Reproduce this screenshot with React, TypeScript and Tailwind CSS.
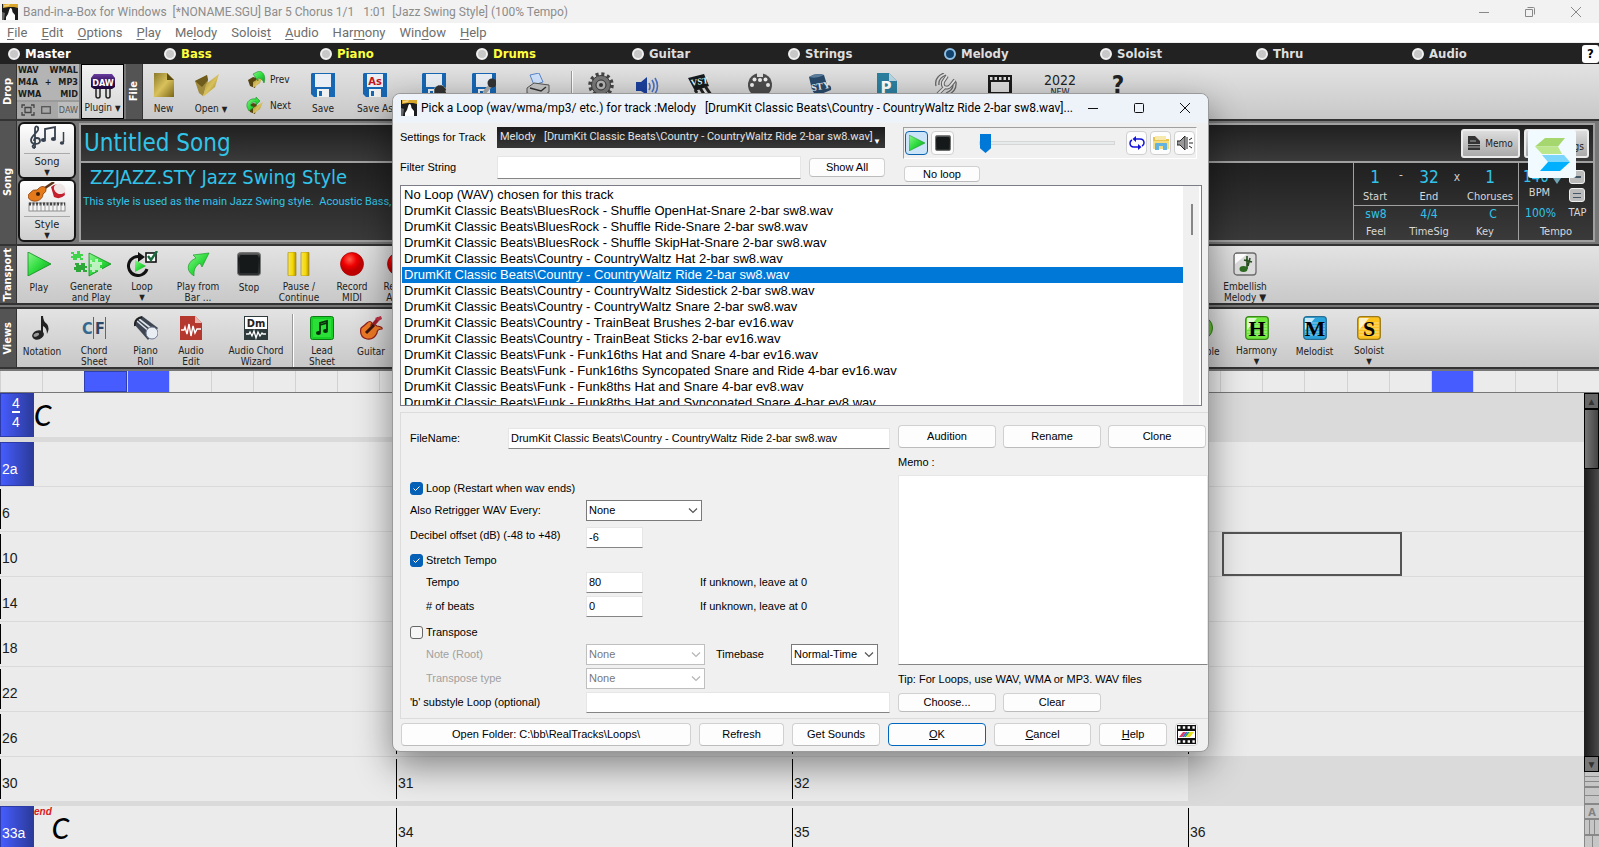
import type { ReactNode } from "react";

const TAHOMA = "font-['DejaVu_Sans_Condensed','DejaVu_Sans',sans-serif]";
const UI = "font-['Roboto','Noto_Sans',sans-serif]";

/* ---------- icons ---------- */

function Defs() {
  return (
    <svg width="0" height="0" className="absolute" aria-hidden="true">
      <defs>
        <linearGradient id="green" x1="0" y1="0" x2="1" y2="1">
          <stop offset="0" stopColor="#8df58d" />
          <stop offset=".5" stopColor="#2fdc3f" />
          <stop offset="1" stopColor="#0f9a20" />
        </linearGradient>
        <linearGradient id="gold" x1="0" y1="0" x2="1" y2="1">
          <stop offset="0" stopColor="#8c7a2c" />
          <stop offset=".5" stopColor="#d9c25c" />
          <stop offset="1" stopColor="#7a6516" />
        </linearGradient>
        <linearGradient id="dark" x1="0" y1="0" x2="0" y2="1">
          <stop offset="0" stopColor="#6b6b6b" />
          <stop offset=".25" stopColor="#161a1a" />
          <stop offset="1" stopColor="#2e3232" />
        </linearGradient>
        <radialGradient id="red" cx=".4" cy=".3">
          <stop offset="0" stopColor="#ff5c4d" />
          <stop offset=".6" stopColor="#f00000" />
          <stop offset="1" stopColor="#c00000" />
        </radialGradient>
        <linearGradient id="yellow" x1="0" y1="0" x2="1" y2="0">
          <stop offset="0" stopColor="#f6e45a" />
          <stop offset=".6" stopColor="#f4d800" />
          <stop offset="1" stopColor="#b08f00" />
        </linearGradient>
        <linearGradient id="purple" x1="0" y1="0" x2="0" y2="1">
          <stop offset="0" stopColor="#6a3fa0" />
          <stop offset=".5" stopColor="#33105c" />
          <stop offset="1" stopColor="#1c0638" />
        </linearGradient>
      </defs>
    </svg>
  );
}

function AppIcon() {
  return (
    <svg viewBox="0 0 16 16" className="size-4 shrink-0">
      <rect width="16" height="16" fill="#1d1d1d" />
      <path d="M1 0H16V4L12 3 7 3 1 4Z" fill="#d9a62c" />
      <path d="M2 1 8 0 7 2 2 3Z" fill="#f3d27a" />
      <path d="M7.500 5Q9 3 10 5.500L10.500 8 13 11V16H4V13L6 10Z" fill="#fff" />
      <path d="M0 8 3 9 2 16H0Z" fill="#666" />
    </svg>
  );
}

function Disk({ children }: { children?: ReactNode }) {
  return (
    <svg viewBox="0 0 24 24" className="size-6">
      <path d="M1 0H24V24H3L0 21V1Z" fill="#1767b3" />
      <rect x="4" y="1" width="16" height="13" fill="#e9eff5" />
      <rect x="6" y="16" width="12" height="8" fill="#f1f1f1" />
      <rect x="8" y="18" width="3" height="5" fill="#1767b3" />
      {children}
    </svg>
  );
}

const NewIcon = () => (
  <svg viewBox="0 0 24 24" className="size-6">
    <path d="M2 0H15L22 7V24H2Z" fill="url(#gold)" />
    <path d="M15 0V7H22Z" fill="#5d4c10" />
  </svg>
);

const FolderIcon = () => (
  <svg viewBox="0 0 26 24" className="h-6 w-[26px]">
    <path d="M1 8 13 2 14 8 9 23 5 20Z" fill="#a08a3c" />
    <path d="M1 8 13 2 14 7 8 14Z" fill="#6d5c1e" />
    <path d="M12 11 25 1 21 14 9 24Z" fill="url(#gold)" />
  </svg>
);

function SmallFolder({ flip }: { flip?: boolean }) {
  return (
    <svg viewBox="0 0 20 18" className="h-[18px] w-5">
      <path d="M2 9 7 6 11 7 9 17 4 15Z" fill="#54440f" />
      <path d="M7 11 17 5 14 12 7 17Z" fill="url(#gold)" />
      {flip ? (
        <path d="M1 10C0 4 5 1 10 2V0L14 4 10 8V5C6 5 4 6 5 9L8 10 3 14Z" fill="url(#green)" stroke="#1c8f2a" strokeWidth=".6" />
      ) : (
        <path d="M7 3 13 0C18 1 20 6 18 12 17 9 15 7 12 7V10Z" fill="url(#green)" stroke="#1c8f2a" strokeWidth=".6" />
      )}
    </svg>
  );
}

const PlugIcon = () => (
  <svg viewBox="0 0 26 26" className="size-[26px]">
    <path d="M6 14h4v9a2 2 0 0 1-4 0ZM16 14h4v9a2 2 0 0 1-4 0Z" fill="#ddd" stroke="#222" strokeWidth="1.5" />
    <path d="M4 1H22L25 5V14L22 16H4L1 14V5Z" fill="url(#purple)" />
    <text x="13" y="13" fontSize="9" fontWeight="700" fill="#fff" textAnchor="middle" fontFamily="DejaVu Sans Condensed, DejaVu Sans">DAW</text>
  </svg>
);

const PrinterIcon = () => (
  <svg viewBox="0 0 24 24" className="size-6">
    <path d="M4 2 13 0 17 9 8 12Z" fill="#cfe2fb" stroke="#5b86c9" />
    <path d="M1 15 8 10 23 12V19L15 24 1 20Z" fill="#c4c4c4" stroke="#555" />
    <path d="M4 15 15 18 20 14" stroke="#333" strokeWidth="1.500" fill="none" />
  </svg>
);

const GearIcon = () => (
  <svg viewBox="0 0 26 26" className="size-[26px]">
    <circle cx="13" cy="13" r="11" fill="none" stroke="#444" strokeWidth="3.5" strokeDasharray="3 2.76" />
    <circle cx="13" cy="13" r="9.5" fill="#777" stroke="#3c3c3c" />
    <circle cx="13" cy="13" r="5" fill="#b5b5b5" stroke="#333" />
    <circle cx="13" cy="13" r="2" fill="#333" />
  </svg>
);

const SpeakerIcon = () => (
  <svg viewBox="0 0 24 24" className="size-6">
    <path d="M1 9H6L12 4V22L6 18H1Z" fill="#1b3f9b" />
    <path d="M14 10q2 4 0 7M17 7q4 6 0 12M20 5q5 8 0 16" fill="none" stroke="#4b70c4" strokeWidth="1.6" />
  </svg>
);

const VstIcon = () => (
  <svg viewBox="0 0 26 24" className="h-6 w-[26px]">
    <path d="M2 5 18 1 23 13 9 18Z" fill="#161a1c" />
    <path d="M9 17 14 24M14 15 20 24M19 13 25 22" stroke="#222" strokeWidth="3" />
    <path d="M12 19 15 24M18 17 21 22" stroke="#eee" strokeWidth="1.200" />
    <text x="5" y="12" fontSize="9" fontWeight="700" fill="#dff" transform="rotate(-8 10 10)" fontFamily="Liberation Sans Narrow">VST</text>
  </svg>
);

const MidiIcon = () => (
  <svg viewBox="0 0 24 24" className="size-6">
    <circle cx="12" cy="12" r="12" fill="#4c4c4c" />
    <rect x="9" y="0" width="6" height="4" fill="#ddd" />
    {[[4, 12], [6.5, 6.5], [12, 7], [17.5, 6.5], [20, 12]].map(([x, y]) => (
      <circle key={x} cx={x} cy={y} r="2" fill="#eee" />
    ))}
  </svg>
);

const StyIcon = () => (
  <svg viewBox="0 0 24 24" className="size-6">
    <path d="M1 4Q8-1 16 2L19 12Q24 12 23 17L8 23 4 17Z" fill="#294a6b" />
    <path d="M1 4Q9 6 16 2Q8-1 1 4" fill="#5c7e9e" />
    <text x="3" y="17" fontSize="10" fontWeight="700" fill="#e4eef5" transform="rotate(-10 10 14)" fontFamily="Liberation Sans Narrow">STY</text>
  </svg>
);

const PIcon = () => (
  <svg viewBox="0 0 24 24" className="size-6">
    <path d="M2 0H14L22 8V24H2Z" fill="#2c7fa0" />
    <path d="M14 0V8H22Z" fill="#b9d6e2" />
    <text x="11" y="20" fontSize="15" fontWeight="700" fill="#fff" textAnchor="middle" fontFamily="DejaVu Sans">P</text>
  </svg>
);

const WrenchIcon = () => (
  <svg viewBox="0 0 24 24" className="size-6">
    <path d="M2 13Q0 4 10 0M5 12Q4 5 12 2M22 9Q23 18 14 22M19 12Q19 17 12 20" fill="none" stroke="#666" strokeWidth="1.3" />
    <path d="M3 22 11 14M13 3 9 9Q8 14 12 14.500 15 15 17 12L21 7" stroke="#666" strokeWidth="3.800" fill="none" />
    <path d="M3 22 11 14M13 3 9 9Q8 14 12 14.500 15 15 17 12L21 7" stroke="#e8e8e8" strokeWidth="1.800" fill="none" />
  </svg>
);

const FilmIcon = () => (
  <svg viewBox="0 0 24 24" className="size-6">
    <rect y="2" width="24" height="22" fill="#1b1b1b" />
    <rect x="3" y="9" width="18" height="10" fill="#dcdcdc" />
    <path d="M2 5.500H22" stroke="#ddd" strokeWidth="3" strokeDasharray="2.5 2" />
  </svg>
);

const SongIcon = () => (
  <svg viewBox="0 0 36 24" className="h-6 w-9">
    <path d="M6 23c-3 0-3-3-1-3M6 23V4c0-4 4-3 3 1-1 3-7 6-7 10 0 5 9 5 9 1 0-4-6-4-6 0" fill="none" stroke="#37414d" strokeWidth="1.8" />
    <path d="M16 14V4L26 2V13" fill="none" stroke="#37414d" strokeWidth="1.8" />
    <ellipse cx="14.5" cy="15" rx="2.6" ry="2" fill="#37414d" />
    <ellipse cx="24.5" cy="14" rx="2.6" ry="2" fill="#37414d" />
    <path d="M34.500 7V17" stroke="#37414d" strokeWidth="1.500" />
    <ellipse cx="33" cy="18" rx="2.200" ry="1.800" fill="#37414d" />
  </svg>
);

const StyleIcon = () => (
  <svg viewBox="0 0 38 30" className="h-[30px] w-[38px]">
    <path d="M14 8 26 0" stroke="#5a3218" strokeWidth="2.5" />
    <path d="M2 11Q5 7 9 8 14 2 18 6 19 10 15 12 15 17 9 19 2 20 0 15Q0 12 2 11" fill="#e57a1a" stroke="#8a3d08" strokeWidth=".8" />
    <circle cx="10" cy="12" r="2" fill="#402008" />
    <path d="M23 5Q28 0 35 4L37 13Q32 18 26 15Z" fill="#c51f2e" />
    <ellipse cx="31.500" cy="6.500" rx="6" ry="5" fill="#efe6e6" transform="rotate(30 31 7)" />
    <rect x="1" y="21" width="36" height="8" fill="#f5f5f5" stroke="#777" strokeWidth=".8" />
    <path d="M1 22H37" stroke="#444" strokeWidth="3" strokeDasharray="2 1.500" />
    <path d="M5 22V29M9 22V29M13 22V29M17 22V29M21 22V29M25 22V29M29 22V29M33 22V29" stroke="#888" strokeWidth=".8" />
  </svg>
);

const PlayIcon = () => (
  <svg viewBox="0 0 24 24" className="size-6">
    <path d="M1 0 24 12 1 24Z" fill="url(#green)" stroke="#138a22" strokeWidth=".8" />
  </svg>
);

const GenerateIcon = () => (
  <svg viewBox="0 0 42 26" className="h-[26px] w-[42px]">
    <path d="M19 2 41 13 19 25Z" fill="url(#green)" stroke="#138a22" strokeWidth=".8" />
    <path d="M20 9h2v2h3v-3h3v3h4v3h-2v3h2v2l-4 2v-2h-3v2h-3v-2h-2v-3h2v-3h-2Z" fill="#d5f5d5" opacity=".85" />
    <path d="M1 1h3v2h3V0h3v3h3v2h-2v2h2v2h-3V7H7v2H3V7H1V5h2V3H1Z" fill="#3fd44a" />
    <path d="M5 12h4v2h2v-2h4v3h2v2h-2v2h2v2h-4v-2h-2v2H6v-2H4v-3h2v-2H5Z" fill="#2fa83a" />
  </svg>
);

const LoopIcon = () => (
  <svg viewBox="0 0 32 26" className="h-[26px] w-8">
    <path d="M15 6A9.500 9.500 0 1 0 21 18" fill="none" stroke="#111" strokeWidth="3" />
    <path d="M12 1 19 6 12 11Z" fill="#111" />
    <path d="M9 9 20 15 9 21Z" fill="url(#green)" />
    <rect x="20" y="2" width="10" height="9" fill="#fff" stroke="#111" strokeWidth="1.600" />
    <path d="M22 5 25 9 31 0" fill="none" stroke="#186b3c" strokeWidth="2.400" />
  </svg>
);

const PlayFromIcon = () => (
  <svg viewBox="0 0 24 24" className="size-6">
    <path d="M7 3 23 1 16 15 14 11Q7 15 8 24 0 19 3 12 5 8 10 6Z" fill="url(#green)" stroke="#1c9c2c" strokeWidth=".7" />
  </svg>
);

function StopIcon({ small }: { small?: boolean }) {
  return (
    <svg viewBox="0 0 24 24" className={small ? "size-4" : "size-6"}>
      <rect x=".5" y=".5" width="23" height="23" rx="3" fill="url(#dark)" stroke="#777" />
      <rect x="3" y="3" width="18" height="18" rx="1" fill="#15191a" />
    </svg>
  );
}

const PauseIcon = () => (
  <svg viewBox="0 0 24 24" className="size-6">
    <rect x="1" width="8" height="24" rx="1" fill="url(#yellow)" stroke="#a58a1d" strokeWidth=".7" />
    <rect x="14" width="8" height="24" rx="1" fill="url(#yellow)" stroke="#a58a1d" strokeWidth=".7" />
  </svg>
);

const RecordIcon = () => (
  <svg viewBox="0 0 24 24" className="size-6">
    <circle cx="12" cy="12" r="11.500" fill="url(#red)" stroke="#a80000" strokeWidth=".7" />
  </svg>
);

const EmbellishIcon = () => (
  <svg viewBox="0 0 24 24" className="size-6">
    <rect x="1" y="1" width="22" height="22" rx="3" fill="#dcdcdc" stroke="#6c6c6c" strokeWidth="1.300" />
    <path d="M2 2H14L2 12Z" fill="#fff" />
    <path d="M14 4V17M11 8 19 10M17 6 15 14" stroke="#234d1c" strokeWidth="1.600" fill="none" />
    <ellipse cx="10.500" cy="17" rx="4" ry="3" fill="#2d6b22" />
  </svg>
);

const NoteIcon = () => (
  <svg viewBox="0 0 24 24" className="size-6">
    <path d="M11 0H13Q13 5 17 8 20 12 17 18 17 12 13 10V18H11Z" fill="#222" />
    <ellipse cx="8" cy="19" rx="6" ry="4.500" fill="#222" transform="rotate(-20 8 19)" />
    <ellipse cx="6.500" cy="18.500" rx="3" ry="1.700" fill="#999" transform="rotate(-25 7 19)" />
  </svg>
);

const ChordIcon = () => (
  <svg viewBox="0 0 26 24" className="h-6 w-[26px]">
    <path d="M12.500 1V23M24.500 1V23" stroke="#666" />
    <text x="1" y="18" fontSize="16" fontWeight="700" fill="#33688f" fontFamily="Liberation Sans Narrow, DejaVu Sans Condensed">C</text>
    <text x="14" y="18" fontSize="16" fontWeight="700" fill="#2b4966" fontFamily="Liberation Sans Narrow, DejaVu Sans Condensed">F</text>
  </svg>
);

const RollIcon = () => (
  <svg viewBox="0 0 24 24" className="size-6">
    <path d="M0 8 8 0 24 12 14 24Z" fill="#3d4553" />
    <path d="M3 5 17 17M5 3 19 14" stroke="#dde3ec" strokeWidth="1.600" />
    <path d="M8 1Q0 3 1 10" fill="none" stroke="#222" strokeWidth="2" />
    <circle cx="18" cy="17" r="6" fill="#e9edf4" stroke="#717d92" />
  </svg>
);

const AudioEditIcon = () => (
  <svg viewBox="0 0 24 24" className="size-6">
    <path d="M1 0H16L23 7V24H1Z" fill="#b5382f" />
    <path d="M16 0V7H23Z" fill="#e9b7b0" />
    <path d="M2 14H5L6 11 8 18 10 8 12 20 14 10 16 17 18 13H22" fill="none" stroke="#fff" strokeWidth="1.400" />
  </svg>
);

const WizardIcon = () => (
  <svg viewBox="0 0 24 24" className="size-6">
    <rect width="24" height="24" fill="#2f3a3d" />
    <rect x="1" y="1" width="22" height="12" fill="#fff" />
    <text x="12" y="11" fontSize="11" fontWeight="700" fill="#222" textAnchor="middle" fontFamily="DejaVu Sans Condensed, DejaVu Sans">Dm</text>
    <path d="M2 18H5L6 16 8 20 10 15 12 22 14 16 16 20 18 17 19 18H22" fill="none" stroke="#fff" strokeWidth="1.300" />
  </svg>
);

const LeadSheetIcon = () => (
  <svg viewBox="0 0 24 24" className="size-6">
    <rect x=".5" y=".5" width="23" height="23" rx="2" fill="#18cf25" stroke="#0b7d14" />
    <rect x="3" y="3" width="18" height="18" fill="#3cf04a" opacity=".5" />
    <path d="M10 16V7L17 5V14M10 9 17 7" fill="none" stroke="#0a2e0c" strokeWidth="1.800" />
    <ellipse cx="8.500" cy="17" rx="2.500" ry="2" fill="#0a2e0c" />
    <ellipse cx="15.500" cy="15" rx="2.500" ry="2" fill="#0a2e0c" />
  </svg>
);

const GuitarIcon = () => (
  <svg viewBox="0 0 24 24" className="size-6">
    <path d="M14 9 20 2" stroke="#a01d2c" strokeWidth="3.500" />
    <path d="M16 2 22 0 23 3 19 5Z" fill="#c23144" />
    <path d="M2 12Q6 9 8 7 11 4 13 7L12 9Q16 8 18 10 24 11 23 13 18 13 18 17 15 24 8 23 0 21 2 12" fill="#ed7a25" stroke="#8e1d1d" strokeWidth="1.200" />
    <path d="M7 17 15 9" stroke="#3b1510" strokeWidth="3" />
  </svg>
);

const GlobeIcon = () => (
  <svg viewBox="0 0 24 24" className="size-6">
    <circle cx="12" cy="12" r="11.500" fill="#63bf33" stroke="#2f7d18" />
  </svg>
);

function LetterIcon({ letter, color, edge }: { letter: string; color: string; edge: string }) {
  return (
    <svg viewBox="0 0 24 24" className="size-6">
      <rect x=".7" y=".7" width="22.600" height="22.600" rx="3" fill={color} stroke={edge} strokeWidth="1.300" />
      <path d="M2 2H12L2 14Z" fill="#fff" opacity=".75" />
      <path d="M2 7H22M2 10H22M2 13H22M2 16H22M2 19H22" stroke="#fff" opacity=".6" strokeWidth=".8" />
      <text x="12" y="19.500" fontSize="22" fontWeight="700" fill="#000" textAnchor="middle" fontFamily="Liberation Serif">{letter}</text>
    </svg>
  );
}

const StockLogo = () => (
  <svg viewBox="0 0 48 48" className="size-12">
    <rect width="48" height="48" rx="3" fill="#f1fbff" />
    <path d="M17 8H37L30 16.500H7Z" fill="#a5d76e" />
    <path d="M7 16.500H30L34 24H14Z" fill="#bce68c" />
    <path d="M14 25H36L42 32H20Z" fill="#7cd6fb" />
    <path d="M20 32H42L32 41H12Z" fill="#00b0ff" />
  </svg>
);

const Chevron = ({ dim }: { dim?: boolean }) => (
  <svg viewBox="0 0 10 6" className="pointer-events-none absolute right-1 top-2 h-1.5 w-2.5">
    <path d="M1 .5 5 4.500 9 .5" fill="none" stroke={dim ? "#b5b5b5" : "#555"} strokeWidth="1.200" />
  </svg>
);

/* ---------- main window ---------- */

function MenuBar() {
  const items: [string, string, string][] = [
    ["", "F", "ile"], ["", "E", "dit"], ["", "O", "ptions"], ["", "P", "lay"], ["Me", "l", "ody"],
    ["Solois", "t", ""], ["", "A", "udio"], ["Har", "m", "ony"], ["Win", "d", "ow"], ["", "H", "elp"],
  ];
  return (
    <nav className={`flex h-5 items-center gap-[14px] border-b border-[#eee] bg-white pl-[7px] text-[13px] text-[#6e6e6e] ${UI}`}>
      {items.map(([a, u, b]) => (
        <button key={a + u + b} type="button" className="leading-[18px]">
          {a}<span className="underline underline-offset-2">{u}</span>{b}
        </button>
      ))}
    </nav>
  );
}

function TrackBar() {
  const tracks = ["Master", "Bass", "Piano", "Drums", "Guitar", "Strings", "Melody", "Soloist", "Thru", "Audio"];
  return (
    <div className="flex h-[21px] items-center bg-[#222] pl-2 font-['DejaVu_Sans_Condensed','DejaVu_Sans',sans-serif] text-[13px] font-bold">
      {tracks.map((t, i) => (
        <label key={t} className={`flex flex-1 items-center gap-[5px] ${i > 0 && i < 4 ? "text-[#ffff3c]" : i === 0 ? "text-white" : "text-[#dedede]"}`}>
          <input type="radio" name="track" defaultChecked={t === "Melody"} className="size-3 appearance-none rounded-full border-2 border-[#f0f0f0] bg-[#c8c8c8] checked:border-[#8fc0e6] checked:bg-[#11436e]" />
          {t}
        </label>
      ))}
      <button type="button" className="ml-3.5 h-[18px] w-[17px] rounded-[3px] bg-white text-[13px] leading-[18px] text-black">?</button>
    </div>
  );
}

function SideTab({ children }: { children: string }) {
  return (
    <div className="flex w-[17px] shrink-0 items-center justify-center border-r border-[#333] bg-[#545454]">
      <span className="rotate-180 text-[11px] font-bold leading-4 text-white [writing-mode:vertical-rl]">{children}</span>
    </div>
  );
}

function Tool({ icon, label, width, arrow }: { icon: ReactNode; label?: string[]; width: string; arrow?: boolean }) {
  return (
    <button type="button" className={`flex shrink-0 flex-col items-center ${width}`}>
      <span className="flex h-7 items-center justify-center">{icon}</span>
      <span className="whitespace-nowrap pt-1 text-center text-[10px] leading-[11px]">
        {label?.map((l) => <span key={l} className="block">{l}</span>)}
        {arrow && <span className="block text-[8px]">▼</span>}
      </span>
    </button>
  );
}

const Divider = () => <div className="w-[2px] shrink-0 border-l border-[#999] bg-white" />;

const PANEL = "flex flex-1 overflow-hidden bg-linear-to-b from-[#e3e3e3] to-[#c8c8c8]";

function FileBar() {
  return (
    <div className={`flex h-[57px] border-b-2 border-[#333] bg-[#777] ${TAHOMA}`}>
      <SideTab>Drop</SideTab>
      <div className="flex w-[62px] shrink-0 flex-col bg-[#9a9a9a] text-[9px] font-bold leading-[12px] text-[#1c1c1c]">
        <div className="flex h-9 flex-col bg-[#b4b4b4] px-px">
          <div className="flex justify-between"><span>WAV</span><span>WMAL</span></div>
          <div className="flex justify-between"><span>M4A</span><span>+</span><span>MP3</span></div>
          <div className="flex justify-between"><span>WMA</span><span>MID</span></div>
        </div>
        <div className="mt-[2px] flex h-4 items-center justify-between bg-[#a8a8a8] pl-1">
          <svg viewBox="0 0 14 12" className="h-3 w-3.5"><path d="M1 4V1H4M10 1H13V4M13 8V11H10M4 11H1V8M4 3.500H10V8.500H4Z" fill="none" stroke="#444" strokeWidth="1.300" /></svg>
          <svg viewBox="0 0 10 8" className="h-2 w-2.5"><rect x=".7" y=".7" width="8.600" height="6.600" fill="none" stroke="#555" strokeWidth="1.300" /></svg>
          <span className="bg-[#bdbdbd] px-px font-normal leading-4 text-[#555]">DAW</span>
        </div>
      </div>
      <button type="button" className="ml-0.5 flex w-[43px] shrink-0 flex-col items-center border border-black bg-linear-to-b from-[#f2f2f2] to-[#d5d5d5] pt-2 text-[10px] leading-[18px]">
        <PlugIcon />
        <span className="whitespace-nowrap">Plugin <span className="text-[8px]">▼</span></span>
      </button>
      <div className="ml-0.5 flex flex-1 overflow-hidden">
        <SideTab>File</SideTab>
        <div className={`${PANEL} pt-[7px]`}>
          <Tool width="w-[41px]" icon={<NewIcon />} label={["New"]} />
          <button type="button" className="flex w-[54px] shrink-0 flex-col items-center">
            <span className="flex h-7 items-center pr-2"><FolderIcon /></span>
            <span className="whitespace-nowrap pt-1 text-[10px] leading-[11px]">Open <span className="text-[8px]">▼</span></span>
          </button>
          <div className="flex w-[58px] shrink-0 flex-col gap-2 pl-2 text-[10px]">
            <button type="button" className="flex items-center gap-1 leading-[18px]"><SmallFolder />Prev</button>
            <button type="button" className="flex items-center gap-1 leading-[18px]"><SmallFolder flip />Next</button>
          </div>
          <Tool width="w-[54px]" icon={<Disk />} label={["Save"]} />
          <Tool width="w-[50px]" label={["Save As"]} icon={<Disk><text x="12" y="12" fontSize="11" fontWeight="700" fill="#c4161c" textAnchor="middle" fontFamily="DejaVu Sans Condensed">As</text></Disk>} />
          <div className="w-1.5 shrink-0" />
          <Tool width="w-[56px]" icon={<Disk><circle cx="18" cy="18" r="6" fill="#333" stroke="#eee" strokeDasharray="1 2" /></Disk>} />
          <Tool width="w-[43px]" icon={<Disk><path d="M12 20 19 12" stroke="#aaa" strokeWidth="4" /><circle cx="20" cy="10" r="4.500" fill="#333" /></Disk>} />
          <Tool width="w-[66px]" icon={<PrinterIcon />} />
          <Divider />
          <Tool width="w-[56px]" icon={<GearIcon />} />
          <Tool width="w-[36px]" icon={<SpeakerIcon />} />
          <Tool width="w-[68px]" icon={<VstIcon />} />
          <Tool width="w-[54px]" icon={<MidiIcon />} />
          <Tool width="w-[66px]" icon={<StyIcon />} />
          <Tool width="w-[68px]" icon={<PIcon />} />
          <Tool width="w-[50px]" icon={<WrenchIcon />} />
          <Tool width="w-[58px]" icon={<FilmIcon />} />
          <button type="button" className="flex w-[62px] shrink-0 flex-col items-center pt-0.5 text-[14px] leading-[15px]">
            2022<span className="text-[9px] leading-[9px]">NEW</span>
          </button>
          <Tool width="w-[54px]" icon={<span className="text-[24px] font-bold">?</span>} />
        </div>
      </div>
    </div>
  );
}

function BigButton({ icon, label, height }: { icon: ReactNode; label: string; height: string }) {
  return (
    <button type="button" className={`flex ${height} w-full flex-col items-center justify-end rounded-md border-2 border-[#151515] bg-linear-to-b from-white to-[#cfcfcf] text-[11px] leading-[13px]`}>
      {icon}
      <span className="mt-1 w-[46px] border-t border-[#aaa] pt-px">{label}</span>
      <span className="text-[8px] leading-[9px]">▼</span>
    </button>
  );
}

const LCD = "bg-linear-to-b from-[#202020] to-[#3a3a3a]";

function SongPanel() {
  return (
    <div className={`flex h-[123px] bg-[#777] pr-1 ${TAHOMA}`}>
      <SideTab>Song</SideTab>
      <div className="ml-px flex w-[58px] shrink-0 flex-col pt-px">
        <BigButton icon={<SongIcon />} label="Song" height="h-[57px]" />
        <BigButton icon={<StyleIcon />} label="Style" height="h-[63px]" />
      </div>
      <div className="ml-[3px] mt-0.5 flex h-[119px] flex-1 flex-col border-2 border-[#a0a0a0] text-[#32c4e8]">
        <div className={`flex h-9 items-center ${LCD}`}>
          <h1 className="flex-1 pl-[3px] text-[24px]">Untitled Song</h1>
          <button type="button" className="mr-1 flex h-[29px] w-[59px] items-center justify-center gap-[5px] rounded-[3px] border-2 border-[#ececec] bg-linear-to-b from-[#ddd] to-[#aaa] text-[10px] text-[#222]">
            <svg viewBox="0 0 12 14" className="h-3.5 w-3"><path d="M0 0H7L12 5V14H0Z" fill="#333" /><path d="M0 8.500H12M0 11H12M2 5H8" stroke="#aaa" /></svg>
            Memo
          </button>
          <button type="button" className="mr-1 flex h-[29px] w-[65px] items-end justify-end rounded-[3px] border-2 border-[#ececec] bg-linear-to-b from-[#ddd] to-[#aaa] pb-0.5 pr-[3px] text-[10px] text-[#222]">Settings</button>
        </div>
        <div className={`flex flex-1 border-t-2 border-[#a0a0a0] ${LCD}`}>
          <div className="flex-1 pt-px">
            <h2 className="pl-[9px] text-[20px] leading-[26px]">ZZJAZZ.STY Jazz Swing Style</h2>
            <p className={`whitespace-pre pl-0.5 text-[11px] leading-[23px] ${UI}`}>This style is used as the main Jazz Swing style.  Acoustic Bass, drums</p>
          </div>
          <div className="flex w-[165px] flex-col border-l border-[#a0a0a0] text-center">
            <div className="grid h-[42px] grid-cols-[42px_10px_46px_10px_56px] pt-1 text-[17px] leading-5">
              <span>1</span><span className="text-xs leading-4 text-[#ccc]">-</span><span>32</span><span className="text-xs leading-5 text-[#ccc]">x</span><span>1</span>
              <span className="col-span-2 pr-2.5 text-[11px] text-[#d8d8d8]">Start</span><span className="text-[11px] text-[#d8d8d8]">End</span><span /><span className="text-[11px] text-[#d8d8d8]">Choruses</span>
            </div>
            <div className="grid flex-1 grid-cols-[52px_46px_66px] border-t border-[#a0a0a0] text-[12px] leading-[17px]">
              <span className="pr-2">sw8</span><span>4/4</span><span className="pl-4">C</span>
              <span className="pr-2 text-[11px] text-[#d8d8d8]">Feel</span><span className="text-[11px] text-[#d8d8d8]">TimeSig</span><span className="text-[11px] text-[#d8d8d8]">Key</span>
            </div>
          </div>
          <div className="grid w-[75px] grid-cols-[45px_29px] border-l border-[#a0a0a0] text-center text-[11px] text-[#d8d8d8]">
            <div className="pl-1 pt-1.5 leading-4">
              <div className="flex items-center gap-1 text-[15px] text-[#32c4e8]">140
                <svg viewBox="0 0 8 14" className="h-3.5 w-2 shrink-0"><path d="M4 0 8 6H0ZM0 8H8L4 14Z" fill="#6fa6b5" /></svg>
              </div>
              <div className="pr-2">BPM</div>
            </div>
            <div className="flex flex-col items-end gap-1 pr-2 pt-[7px]">
              <button type="button" aria-label="Slower" className="flex h-[14px] w-4 items-center justify-center rounded-[3px] border border-[#eee] bg-[#bbb]"><span className="h-0.5 w-2 bg-[#456]" /></button>
              <button type="button" aria-label="Tempo" className="flex h-[14px] w-4 items-center justify-center rounded-[3px] border border-[#eee] bg-[#bbb]"><span className="h-[5px] w-2 border-y border-[#456]" /></button>
            </div>
            <div className="pr-0.5 text-[12px] leading-5 text-[#32c4e8]">100%</div><div className="pr-0.5 leading-5">TAP</div>
            <div className="col-span-2 leading-[14px]">Tempo</div>
          </div>
        </div>
      </div>
    </div>
  );
}

function Transport() {
  return (
    <div className={`flex h-[61px] border-y-2 border-t-[#333] border-b-[#333] bg-[#555] ${TAHOMA}`}>
      <SideTab>Transport</SideTab>
      <div className={`${PANEL} pt-1`}>
        <Tool width="w-[44px]" icon={<PlayIcon />} label={["Play"]} />
        <Tool width="w-[60px]" icon={<GenerateIcon />} label={["Generate", "and Play"]} />
        <Tool width="w-[42px]" icon={<LoopIcon />} label={["Loop"]} arrow />
        <Tool width="w-[70px]" icon={<PlayFromIcon />} label={["Play from", "Bar ..."]} />
        <Tool width="w-[32px]" icon={<StopIcon />} label={["Stop"]} />
        <Tool width="w-[68px]" icon={<PauseIcon />} label={["Pause /", "Continue"]} />
        <Tool width="w-[38px]" icon={<RecordIcon />} label={["Record", "MIDI"]} />
        <Tool width="w-[56px]" icon={<RecordIcon />} label={["Record", "Audio"]} />
        <div className="w-[786px] shrink-0" />
        <Tool width="w-[64px]" icon={<EmbellishIcon />} label={["Embellish", "Melody ▼"]} />
      </div>
    </div>
  );
}

function Views() {
  return (
    <div className={`mt-0.5 flex h-[62px] border-y-2 border-t-[#333] border-b-[#333] bg-[#555] ${TAHOMA}`}>
      <SideTab>Views</SideTab>
      <div className={`${PANEL} pt-[5px]`}>
        <Tool width="w-[50px]" icon={<NoteIcon />} label={["Notation"]} />
        <Tool width="w-[54px]" icon={<ChordIcon />} label={["Chord", "Sheet"]} />
        <Tool width="w-[49px]" icon={<RollIcon />} label={["Piano", "Roll"]} />
        <Tool width="w-[42px]" icon={<AudioEditIcon />} label={["Audio", "Edit"]} />
        <div className="w-2 shrink-0" />
        <Tool width="w-[72px]" icon={<WizardIcon />} label={["Audio Chord", "Wizard"]} />
        <Divider />
        <Tool width="w-[56px]" icon={<LeadSheetIcon />} label={["Lead", "Sheet"]} />
        <Tool width="w-[42px]" icon={<GuitarIcon />} label={["Guitar"]} />
        <div className="w-[786px] shrink-0" />
        <Tool width="w-[45px]" icon={<GlobeIcon />} label={["Playable"]} />
        <Tool width="w-[67px]" icon={<LetterIcon letter="H" color="#6fe63c" edge="#3c8a1d" />} label={["Harmony"]} arrow />
        <Tool width="w-[49px]" icon={<LetterIcon letter="M" color="#2ba3dc" edge="#2a6f93" />} label={["Melodist"]} />
        <Tool width="w-[60px]" icon={<LetterIcon letter="S" color="#fcc21d" edge="#9c7a1c" />} label={["Soloist"]} arrow />
      </div>
    </div>
  );
}

function Overview() {
  const blue = [2, 3, 34];
  return (
    <div className="mt-px flex h-[23px] border-b border-t border-b-[#777] border-t-[#777] bg-[#ebebeb]">
      {Array.from({ length: 38 }, (_, i) => (
        <div key={i} className={`flex-1 ${i === 2 ? "border border-[#2f3fae]" : "border-l border-[#d2d2d2]"} ${blue.includes(i) ? "bg-[#465cff]" : ""}`} />
      ))}
    </div>
  );
}

interface Line { labels: string[]; part?: boolean; gap?: boolean; dim?: number }

const LINES: Line[] = [
  { labels: ["", "", "", ""], part: true, gap: true, dim: 1 },
  { labels: ["2a", "3", "4", "5"], part: true },
  { labels: ["6", "7", "8", "9"] },
  { labels: ["10", "11", "12", "13"] },
  { labels: ["14", "15", "16", "17"] },
  { labels: ["18", "19", "20", "21"] },
  { labels: ["22", "23", "24", "25"] },
  { labels: ["26", "27", "28", "29"] },
  { labels: ["30", "31", "32", ""], gap: true, dim: 3 },
  { labels: ["33a", "34", "35", "36"], part: true },
];

const Chord = () => <span className="self-center font-['Lato',sans-serif] text-[28px] font-medium italic leading-none text-black">C</span>;

function ChordSheet() {
  return (
    <div className="flex min-h-0 flex-1 overflow-hidden">
      <div className="flex-1 font-['Liberation_Sans',Arial,sans-serif] text-[14px] text-[#1a1a1a]">
        {LINES.map((line, r) => (
          <div key={r} className={`grid grid-cols-4 border-[#dadada] bg-[#ebebeb] ${line.gap ? "h-[49px] border-b-[5px]" : "h-[45px] border-b"}`}>
            {line.labels.map((label, c) => {
              const part = line.part && c === 0;
              const dim = line.dim !== undefined && c >= line.dim;
              return (
                <div key={c} className={`relative flex ${dim ? "bg-[#dadada]" : ""}`}>
                  {part ? (
                    <div className="flex w-[34px] flex-col justify-end border border-[#2c3ba6] bg-linear-to-r from-[#465cff] to-[#2b3a9a] pb-1.5 pl-px leading-5 text-white">
                      {r === 0 ? (
                        <span className="ml-2.5 flex w-2 flex-col gap-px text-center leading-[16px]"><span className="border-b-2">4</span><span>4</span></span>
                      ) : label}
                    </div>
                  ) : !dim && <div className="my-0.5 border-l border-black pl-px pt-[14px] leading-5">{label}</div>}
                  {r === 0 && c === 0 && <Chord />}
                  {r === 9 && c === 0 && (
                    <>
                      <span className="self-start text-[10px] font-bold italic leading-3 text-[#d92020]">end</span>
                      <Chord />
                    </>
                  )}
                  {r === 3 && c === 3 && <div className="absolute bottom-0 left-[34px] top-0 w-[180px] border-2 border-[#555]" />}
                </div>
              );
            })}
          </div>
        ))}
      </div>
      <div className="flex w-[15px] shrink-0 flex-col bg-linear-to-r from-[#1c1c1c] to-[#4a4a4a]">
        <button type="button" aria-label="Scroll up" className="h-4 border border-black bg-[#666] text-[10px] leading-3 text-[#333]">▲</button>
        <div className="h-[60px] border border-black bg-linear-to-r from-[#777] to-[#444]" />
        <div className="flex-1" />
        <button type="button" aria-label="Scroll down" className="h-4 border border-black bg-[#777] text-[10px] leading-3 text-[#333]">▼</button>
        <div className="flex h-[75px] flex-col border-l border-[#888] bg-[#c6c6c6] text-center text-[11px] font-bold text-[#808080]">
          <div className="h-[5px] border-b border-[#888]" /><div className="h-[5px] border-b border-[#888]" />
          <div className="h-[6px] border-b-2 border-[#888]" /><div className="h-[8px] border-b border-[#888]" /><div className="h-[9px] border-b-2 border-[#888]" />
          <div className="h-[15px] border-b-2 border-[#888] leading-[14px]">A</div>
          <div className="flex h-4 justify-center gap-1 border-b-2 border-[#888]"><span className="border-l border-[#888]" /><span className="border-l border-[#888]" /></div>
          <div className="mx-auto flex-1 border-l border-[#888]" />
        </div>
      </div>
    </div>
  );
}

/* ---------- dialog ---------- */

const FIELD = "border border-[#e6e6e6] border-b-[#858585] bg-white px-0.5 pb-px leading-[18px] outline-none";

function Btn({ children, width, height = "h-[23px]", primary }: { children: ReactNode; width: string; height?: string; primary?: boolean }) {
  return (
    <button type="button" className={`${height} ${width} shrink-0 whitespace-pre rounded border bg-[#fdfdfd] ${primary ? "border-[#0067c0]" : "border-[#d0d0d0] border-b-[#bcbcbc]"}`}>
      {children}
    </button>
  );
}

function Check({ children, checked }: { children: string; checked?: boolean }) {
  return (
    <label className="relative flex h-4 items-center gap-[3px]">
      <input type="checkbox" defaultChecked={checked} className="peer size-[13px] appearance-none rounded-[3px] border border-[#666] bg-[#f6f6f6] checked:border-[#0560b6] checked:bg-[#0560b6]" />
      <svg viewBox="0 0 13 13" className="pointer-events-none absolute left-0 hidden size-[13px] peer-checked:block"><path d="M3.500 6.500 5.500 8.500 9.500 4.500" fill="none" stroke="#fff" /></svg>
      {children}
    </label>
  );
}

function Drop({ id, value, width, disabled }: { id: string; value: string; width: string; disabled?: boolean }) {
  return (
    <div className={`relative ${width} shrink-0`}>
      <select id={id} disabled={disabled} className={`h-[21px] w-full appearance-none border bg-white px-0.5 pb-px leading-[18px] ${disabled ? "border-[#bfbfbf] text-[#777]" : "border-[#7a7a7a]"}`}>
        <option>{value}</option>
      </select>
      <Chevron dim={disabled} />
    </div>
  );
}

const FILES = [
  "No Loop (WAV) chosen for this track",
  "BluesRock - Shuffle OpenHat-Snare 2-bar sw8.wav",
  "BluesRock - Shuffle Ride-Snare 2-bar sw8.wav",
  "BluesRock - Shuffle SkipHat-Snare 2-bar sw8.wav",
  "Country - CountryWaltz Hat 2-bar sw8.wav",
  "Country - CountryWaltz Ride 2-bar sw8.wav",
  "Country - CountryWaltz Sidestick 2-bar sw8.wav",
  "Country - CountryWaltz Snare 2-bar sw8.wav",
  "Country - TrainBeat Brushes 2-bar ev16.wav",
  "Country - TrainBeat Sticks 2-bar ev16.wav",
  "Funk - Funk16ths Hat and Snare 4-bar ev16.wav",
  "Funk - Funk16ths Syncopated Snare and Ride 4-bar ev16.wav",
  "Funk - Funk8ths Hat and Snare 4-bar ev8.wav",
  "Funk - Funk8ths Hat and Syncopated Snare 4-bar ev8.wav",
].map((f, i) => (i === 0 ? f : `DrumKit Classic Beats\\${f}`));

function DialogHeader() {
  return (
    <header className={`flex h-[29px] items-center justify-between rounded-t-lg bg-[#eef3fa] pb-px pl-2 text-xs text-black ${UI}`}>
      <AppIcon />
      <h2 className="min-w-0 flex-1 whitespace-pre pl-1">Pick a Loop (wav/wma/mp3/ etc.) for track :Melody   [DrumKit Classic Beats\Country - CountryWaltz Ride 2-bar sw8.wav]...</h2>
      <div className="flex">
        <button type="button" aria-label="Minimize" className="flex w-[46px] justify-center"><svg viewBox="0 0 10 10" className="size-2.5"><path d="M0 5.500H10" stroke="#111" /></svg></button>
        <button type="button" aria-label="Maximize" className="flex w-[46px] justify-center"><svg viewBox="0 0 10 10" className="size-2.5"><rect x=".5" y=".5" width="9" height="9" rx="1" fill="none" stroke="#111" /></svg></button>
        <button type="button" aria-label="Close" className="flex w-[46px] justify-center"><svg viewBox="0 0 10 10" className="size-2.5"><path d="M0 0 10 10M10 0 0 10" stroke="#111" /></svg></button>
      </div>
    </header>
  );
}

function Player() {
  const small = "flex h-6 items-center justify-center rounded border border-[#d0d0d0] bg-[#fdfdfd]";
  return (
    <div className="flex h-8 w-[294px] items-center border border-b-white border-l-[#a0a0a0] border-r-white border-t-[#a0a0a0] pl-px pr-px">
      <button type="button" aria-label="Play" className="flex h-6 w-[23px] items-center justify-center rounded border border-[#0a62ae] bg-[#cce4f7]"><svg viewBox="0 0 16 16" className="size-4"><path d="M0 0 16 8 0 16Z" fill="url(#green)" stroke="#138a22" strokeWidth=".5" /></svg></button>
      <button type="button" aria-label="Stop" className={`${small} ml-[3px] w-[23px]`}><StopIcon small /></button>
      <input type="range" aria-label="Position" defaultValue={0} className="ml-[25px] h-5 w-[136px] appearance-none bg-transparent [&::-webkit-slider-runnable-track]:h-1 [&::-webkit-slider-runnable-track]:border [&::-webkit-slider-runnable-track]:border-[#d6d6d6] [&::-webkit-slider-runnable-track]:bg-[#e7eaea] [&::-webkit-slider-thumb]:-mt-2 [&::-webkit-slider-thumb]:h-[19px] [&::-webkit-slider-thumb]:w-[11px] [&::-webkit-slider-thumb]:appearance-none [&::-webkit-slider-thumb]:bg-[#0078d7] [&::-webkit-slider-thumb]:[clip-path:polygon(0_0,100%_0,100%_75%,50%_100%,0_75%)]" />
      <div className="ml-auto flex gap-[3px]">
        <button type="button" aria-label="Loop" className={`${small} w-[21px]`}><svg viewBox="0 0 16 16" className="size-4"><path d="M6 4H11Q15 4 15 8 15 10 13 11M10 12H5Q1 12 1 8 1 6 3 5" fill="none" stroke="#1313d8" strokeWidth="1.500" /><path d="M7 1V7L3.500 4ZM9 9V15L12.500 12Z" fill="#1313d8" /></svg></button>
        <button type="button" aria-label="Open folder" className={`${small} w-[21px]`}><svg viewBox="0 0 16 16" className="size-4"><path d="M0 2H6L8 4H16V14H0Z" fill="#e8c34e" /><path d="M2 1H13V5H2Z" fill="#f7e9ab" /><path d="M0 6H16V14H0Z" fill="#f6dc7c" /><path d="M2 15V9Q2 8 3 8H13Q14 8 14 9V15H10V11H6V15Z" fill="#63b3e0" /></svg></button>
        <button type="button" aria-label="Volume" className={`${small} w-[21px]`}><svg viewBox="0 0 16 16" className="size-4"><path d="M0 6H3L8 1V15L3 10H0Z" fill="#999" stroke="#222" /><path d="M10 2V14M12 5 15 3M12 8H16M12 11 15 13" stroke="#222" fill="none" /></svg></button>
      </div>
    </div>
  );
}

function LoopForm() {
  const row = "flex h-[21px] items-center";
  return (
    <div className="w-[480px]">
      <div className={row}>
        <label htmlFor="file" className="w-[98px]">FileName:</label>
        <input id="file" className={`${FIELD} h-[21px] flex-1`} defaultValue="DrumKit Classic Beats\Country - CountryWaltz Ride 2-bar sw8.wav" />
      </div>
      <div className="mt-[31px]"><Check checked>Loop (Restart when wav ends)</Check></div>
      <div className={`${row} mt-1`}><label htmlFor="every" className="w-[176px]">Also Retrigger WAV Every:</label><Drop id="every" value="None" width="w-[116px]" /></div>
      <div className={`${row} mt-1.5`}><label htmlFor="db" className="w-[176px] pb-1">Decibel offset (dB) (-48 to +48)</label><input id="db" className={`${FIELD} h-[21px] w-[57px]`} defaultValue="-6" /></div>
      <div className="mt-1"><Check checked>Stretch Tempo</Check></div>
      <div className={`${row} mt-1`}><label htmlFor="tempo" className="w-[176px] pl-4">Tempo</label><input id="tempo" className={`${FIELD} mr-[57px] h-[21px] w-[57px]`} defaultValue="80" />If unknown, leave at 0</div>
      <div className={`${row} mt-[3px]`}><label htmlFor="beats" className="w-[176px] pl-4"># of beats</label><input id="beats" className={`${FIELD} mr-[57px] h-[21px] w-[57px]`} defaultValue="0" />If unknown, leave at 0</div>
      <div className="mt-[7px]"><Check>Transpose</Check></div>
      <div className={`${row} mt-1`}>
        <label htmlFor="root" className="w-[176px] pl-4 text-[#a0a0a0]">Note (Root)</label><Drop id="root" value="None" width="w-[119px]" disabled />
        <label htmlFor="base" className="w-[86px] pl-[11px]">Timebase</label><Drop id="base" value="Normal-Time" width="w-[87px]" />
      </div>
      <div className={`${row} mt-[3px]`}><label htmlFor="type" className="w-[176px] pl-4 text-[#a0a0a0]">Transpose type</label><Drop id="type" value="None" width="w-[119px]" disabled /></div>
      <div className={`${row} mt-[3px]`}><label htmlFor="sub" className="w-[176px]">'b' substyle Loop (optional)</label><input id="sub" className={`${FIELD} h-[21px] flex-1`} /></div>
    </div>
  );
}

function PickLoopDialog() {
  return (
    <section role="dialog" aria-label="Pick a Loop" className="absolute left-[392px] top-[93px] w-[817px] rounded-lg border border-[#9a9a9a] bg-[#f0f0f0] pb-[5px] font-['Liberation_Sans',Arial,sans-serif] text-[11px] text-black shadow-[0_14px_36px_rgba(0,0,0,0.45)]">
      <DialogHeader />
      <div className="flex h-[62px] pl-[7px] pt-1">
        <div className="w-[485px]">
          <div className="flex h-[21px] items-center">
            <label htmlFor="settings" className="w-[97px]">Settings for Track</label>
            <div className="relative flex-1">
              <select id="settings" className={`h-[21px] w-full appearance-none bg-linear-to-b from-[#1c1c1c] to-[#383838] pl-[3px] text-[11px] text-[#e2e2e2] ${UI}`}>
                <option>{"Melody \u00a0 [DrumKit Classic Beats\\Country - CountryWaltz Ride 2-bar sw8.wav]"}</option>
              </select>
              <span className="pointer-events-none absolute bottom-0 right-1 text-[8px] leading-3 text-white">▼</span>
            </div>
          </div>
          <div className="mt-2 flex h-[23px] items-center">
            <label htmlFor="filter" className="w-[97px]">Filter String</label>
            <input id="filter" className={`${FIELD} h-[23px] flex-1`} />
            <span className="w-2" />
            <Btn width="w-[76px]" height="h-[19px]">Show All</Btn>
          </div>
        </div>
        <div className="ml-[18px]">
          <Player />
          <div className="mt-[7px] flex pl-px"><Btn width="w-[76px]" height="h-4"><span className="block leading-[14px]">No loop</span></Btn></div>
        </div>
      </div>
      <div className="ml-[7px] flex h-[221px] w-[802px] border border-[#7c7c86] bg-white pl-px pr-0.5">
        <ul className="flex-1 overflow-hidden pt-px text-[13px] leading-4">
          {FILES.map((f, i) => (
            <li key={f} className={`whitespace-nowrap pl-0.5 ${i === 5 ? "bg-[#0078d7] text-white" : ""}`}>{f}</li>
          ))}
        </ul>
        <div className="w-4 bg-[#f0f0f0]"><div className="ml-2 mt-[18px] h-[31px] w-0.5 bg-[#868686]" /></div>
      </div>
      <div className="ml-[7px] mt-1.5 flex border border-r-0 border-[#dcdcdc] pb-[5px] pl-[9px] pt-3">
        <div className="pt-[3px]"><LoopForm /></div>
        <div className="ml-2 flex flex-1 flex-col">
          <div className="flex gap-[7px]"><Btn width="w-[98px]">Audition</Btn><Btn width="w-[98px]">Rename</Btn><Btn width="w-[98px]">Clone</Btn></div>
          <label htmlFor="memo" className="h-[27px] leading-7">Memo :</label>
          <textarea id="memo" className="block h-[190px] resize-none border border-[#e6e6e6] border-b-[#858585] bg-white outline-none" />
          <p className="h-7 leading-7">Tip: For Loops, use WAV, WMA or MP3. WAV files</p>
          <div className="flex gap-[7px]"><Btn width="w-[98px]" height="h-[19px]">Choose...</Btn><Btn width="w-[98px]" height="h-[19px]">Clear</Btn></div>
        </div>
      </div>
      <div className="mt-1 flex gap-2 pl-2">
        <Btn width="w-[290px]">Open Folder: C:\bb\RealTracks\Loops\</Btn>
        <Btn width="w-[85px]">Refresh</Btn>
        <Btn width="w-[88px]">Get Sounds</Btn>
        <Btn width="w-[98px]" primary><u>O</u>K</Btn>
        <Btn width="w-[97px]"><u>C</u>ancel</Btn>
        <Btn width="w-[68px]"><u>H</u>elp</Btn>
        <button type="button" aria-label="Video help" className="flex size-[23px] items-center justify-center rounded border border-[#d0d0d0] bg-[#fdfdfd]">
          <svg viewBox="0 0 19 19" className="size-[19px]"><rect width="19" height="19" fill="#111" /><path d="M1 2.500H19M1 16.500H19" stroke="#fff" strokeWidth="2.400" strokeDasharray="2.400 2.400" /><rect x="1" y="6" width="17" height="7" fill="#fff" /><path d="M2 12 6 7H9L5 12Z" fill="#e0395a" /><path d="M5 12 9 7H11L7 12Z" fill="#3d5fe0" /><path d="M7 12 11 7H13L9 12Z" fill="#22a35c" /><path d="M9 12 13 7H17L13 12Z" fill="#e8e01d" /></svg>
        </button>
      </div>
    </section>
  );
}

export default function App() {
  return (
    <main className="relative flex h-screen flex-col overflow-hidden bg-[#777] text-[#222]">
      <Defs />
      <header className={`flex h-[23px] shrink-0 items-center bg-[#f2f2f2] pl-0.5 text-xs text-[#8c8c8c] ${UI}`}>
        <AppIcon />
        <span className="flex-1 whitespace-pre pl-[5px]">Band-in-a-Box for Windows  [*NONAME.SGU] Bar 5 Chorus 1/1   1:01  [Jazz Swing Style] (100% Tempo)</span>
        <button type="button" aria-label="Minimize" className="flex w-[46px] justify-center"><svg viewBox="0 0 10 10" className="size-2.5"><path d="M0 5.500H10" stroke="#888" /></svg></button>
        <button type="button" aria-label="Restore" className="flex w-[46px] justify-center"><svg viewBox="0 0 10 10" className="size-2.5"><path d="M.5 2.500H7.500V9.500H.5ZM2.500.5H8.500Q9.500.5 9.500 1.500V7.500" fill="none" stroke="#888" /></svg></button>
        <button type="button" aria-label="Close" className="flex w-[46px] justify-center"><svg viewBox="0 0 10 10" className="size-2.5"><path d="M0 0 10 10M10 0 0 10" stroke="#888" /></svg></button>
      </header>
      <div className="shrink-0">
        <MenuBar />
        <TrackBar />
        <FileBar />
        <SongPanel />
        <Transport />
        <Views />
        <Overview />
      </div>
      <ChordSheet />
      <PickLoopDialog />
      <div className="absolute right-[23px] top-[130px]"><StockLogo /></div>
    </main>
  );
}
